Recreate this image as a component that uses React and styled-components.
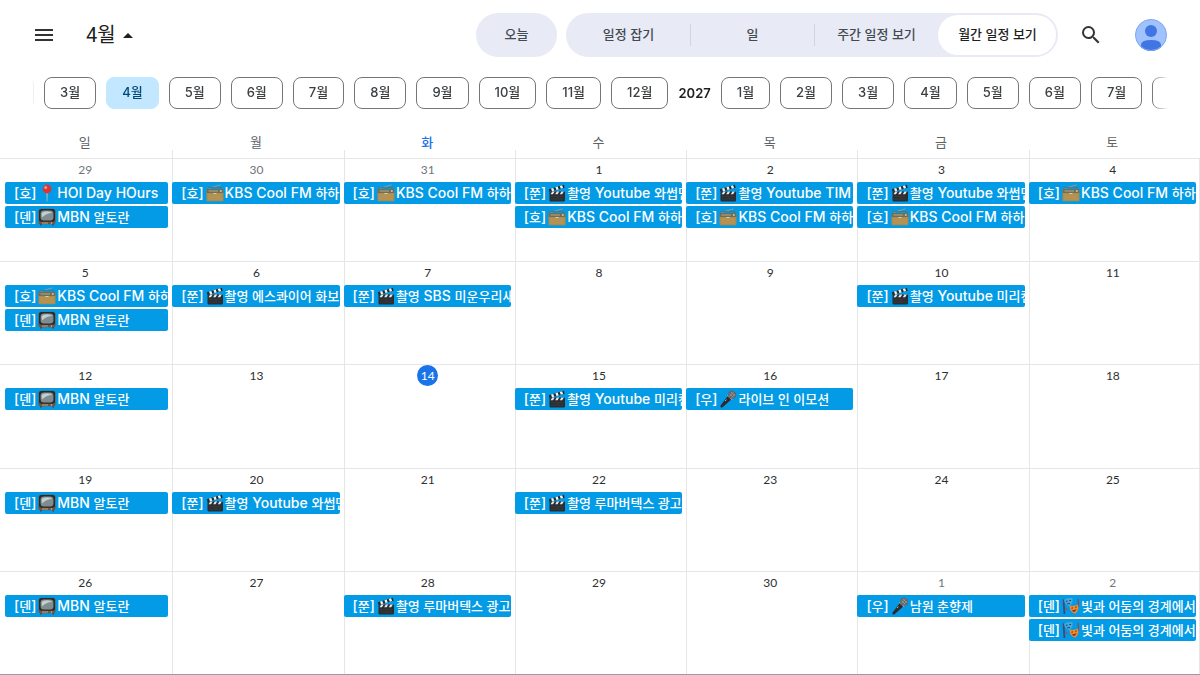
import { useState } from 'react';
import styled, { createGlobalStyle, css } from 'styled-components';

const GlobalStyle = createGlobalStyle`
  * {
    box-sizing: border-box;
  }
  body {
    margin: 0;
    background: #fff;
    color: #1f1f1f;
    font-family: Inter, 'Noto Sans CJK KR', sans-serif;
    font-size: 13px;
  }
  button {
    font: inherit;
    color: inherit;
    margin: 0;
    padding: 0;
    border: 0;
    background: none;
    cursor: pointer;
  }
`;

const Page = styled.div`
  display: flex;
  flex-direction: column;
  min-height: 100vh;
  border-bottom: 1px solid #9a9c9e;
`;

const Toolbar = styled.header`
  display: flex;
  align-items: center;
  padding: 13px 33px 0 32px;
`;

const IconButton = styled.button`
  display: flex;
  color: #333;
`;

const MonthTitle = styled.button`
  display: flex;
  align-items: center;
  gap: 6px;
  margin: 0 auto 0 30px;
  font-family: Roboto, 'Noto Sans CJK KR', sans-serif;
  font-size: 20px;
  line-height: 28px;
`;

const pill = css`
  height: 44px;
  border-radius: 22px;
  background: #e8ebf5;
`;

const TodayButton = styled.button`
  ${pill}
  width: 81px;
  margin-right: 9px;
  padding-bottom: 4px;
  color: #444a52;
  font-weight: 500;
`;

const ViewSwitch = styled.div`
  ${pill}
  display: grid;
  grid-template-columns: repeat(3, 124px) 120px;
  align-items: center;
  margin-right: 21px;
`;

const ViewButton = styled.button`
  height: 22px;
  padding-bottom: 4px;
  border-left: 1px solid ${({ $divided }) => ($divided ? '#d0d4de' : 'transparent')};
  color: #444a52;
  font-weight: 500;
  ${({ $active }) =>
    $active &&
    css`
      height: 40px;
      margin-right: 2px;
      border-radius: 20px;
      background: #fff;
      color: #1f1f1f;
    `}
`;

const Avatar = styled.button`
  display: flex;
  margin-left: 32px;
`;

const MonthStrip = styled.nav`
  display: flex;
  align-items: center;
  gap: 10px;
  margin: 20px 32px 0;
  overflow: hidden;
  mask-image: linear-gradient(to right, transparent, #000 12px, #000 calc(100% - 16px), transparent);
`;

const MonthButton = styled.button`
  flex-shrink: 0;
  height: 32px;
  padding: 0 15px 3px;
  border: 1px solid #747775;
  border-radius: 8px;
  color: #3c4043;
  font-weight: 500;
  ${({ $active }) =>
    $active &&
    css`
      border-color: #c2e7ff;
      background: #c2e7ff;
      color: #004a77;
    `}
`;

const PrevMonthButton = styled(MonthButton)`
  width: 51px;
  margin-left: -49px;
`;

const NextMonthButton = styled(MonthButton)`
  width: 51px;
`;

const Year = styled.span`
  flex-shrink: 0;
  font-weight: 600;
`;

const Calendar = styled.table`
  display: flex;
  flex: 1;
  flex-direction: column;
  margin-top: 20px;
`;

const WeekHead = styled.thead`
  display: block;
`;

const WeekBody = styled.tbody`
  display: grid;
  flex: 1;
  grid-auto-rows: 1fr;
`;

const WeekRow = styled.tr`
  display: grid;
  grid-template-columns: repeat(7, minmax(0, 1fr));
  padding-left: 1px;
`;

const DayRow = styled(WeekRow)`
  border-top: 1px solid #e4e6e8;
`;

const Weekday = styled.th`
  height: 29px;
  padding: 3px 4px 0 0;
  color: ${({ $today }) => ($today ? '#1a73e8' : '#5f6368')};
  font-weight: ${({ $today }) => ($today ? 500 : 400)};
  line-height: 20px;
  background: linear-gradient(#e4e6e8, #e4e6e8) left bottom / 1px 8px no-repeat;
  &:first-child {
    background: none;
  }
`;

const EventChip = styled.button`
  display: flex;
  align-items: center;
  height: 22px;
  margin-left: -1px;
  padding-left: 9px;
  border-radius: 2px;
  background: #039be5;
  color: #fff;
  font-size: 14px;
  font-weight: 500;
  line-height: 22px;
  white-space: pre;
  overflow: hidden;
  svg {
    flex-shrink: 0;
    margin: 0 1px 0 2px;
  }
`;

const Day = styled.td`
  display: flex;
  flex-direction: column;
  align-items: stretch;
  gap: 2px;
  min-height: 90px;
  padding: 0 4px 0 0;
  border-left: 1px solid #e4e6e8;
  &:first-child {
    border-left-color: transparent;
  }
  &:first-child ${EventChip} {
    margin-left: 3px;
  }
  &:last-child {
    border-right: 1px solid #e4e6e8;
    padding-right: 3px;
  }
`;

const DateNumber = styled.span`
  align-self: center;
  width: 21px;
  height: 21px;
  border-radius: 50%;
  font-family: Lato, sans-serif;
  font-size: 12px;
  line-height: 21px;
  text-align: center;
  color: ${({ $outside }) => ($outside ? '#70757a' : '#2d2f31')};
  ${({ $today }) =>
    $today &&
    css`
      background: #1a73e8;
      color: #fff;
    `}
`;

const Hangul = styled.span`
  font-size: 13px;
`;

const PinIcon = () => (
  <svg width="18" height="18" viewBox="0 0 18 18" aria-hidden="true">
    <path d="M8.4 8h1.3l-.3 9.5h-.7z" fill="#b6bcc2" />
    <circle cx="9" cy="5" r="4.4" fill="#dc3530" />
    <circle cx="7.7" cy="3.6" r="1.5" fill="#ff8f86" />
  </svg>
);

const TvIcon = () => (
  <svg width="18" height="18" viewBox="0 0 18 18" aria-hidden="true">
    <path d="M3.5 15l-1 2.5M14.5 15l1 2.5" stroke="#59402d" strokeWidth="1.5" />
    <rect x="0.5" y="0.8" width="17" height="15.4" rx="2.5" fill="#76533b" />
    <rect x="1" y="1" width="16" height="12.8" rx="2.5" fill="#292c2e" />
    <rect x="2.6" y="2.4" width="12.8" height="10" rx="3.2" fill="#7f8c90" />
    <path d="M3.6 5.6Q5 3.2 9 3.2t5 1.8Q8.5 5 4 9.6z" fill="#c3cdcf" />
    <path d="M4 15h6" stroke="#c7a27c" />
    <circle cx="13.5" cy="15" r="0.8" fill="#d8c2a1" />
  </svg>
);

const RadioIcon = () => (
  <svg width="18" height="18" viewBox="0 0 18 18" aria-hidden="true">
    <path d="M2 4.6L14.5.8" stroke="#8ba2a7" strokeWidth="0.9" />
    <path d="M2.2 6V3.6h13.6V6" fill="none" stroke="#5b7373" strokeWidth="1" />
    <rect x="0.5" y="5" width="17" height="12.3" rx="1" fill="#b08c4c" />
    <rect x="0.5" y="5" width="17" height="4" rx="0.8" fill="#6d6f5c" />
    <path d="M2.5 7h9.5" stroke="#b5a87a" strokeWidth="1.1" />
    <circle cx="14.8" cy="7" r="1" fill="#d4c79d" />
    <path d="M2 11h14M2 13h14M2 15h14" stroke="#c4a15f" strokeWidth="0.6" />
    <path d="M7.5 9h3v1h-3z" fill="#e0d2a5" />
  </svg>
);

const ClapperIcon = () => (
  <svg width="18" height="18" viewBox="0 0 18 18" aria-hidden="true">
    <path d="M.8 5.2L15.8.8l.9 3L1.6 8z" fill="#26292c" />
    <path d="M3 4.6l2.3-.7 1 2.8L4 7.3zM7.4 3.3l2.3-.7 1 2.8-2.3.7zM11.8 2l2.3-.7 1 2.8-2.3.7z" fill="#eef2f3" />
    <rect x="1.5" y="7.6" width="15.5" height="9.8" rx="0.8" fill="#2b2d30" />
    <path d="M4.2 7.6h2.4L5 10.2H2.6zM8.8 7.6h2.4l-1.6 2.6H7.2zM13.4 7.6h2.4l-1.6 2.6h-2.4z" fill="#e4e9eb" />
    <path d="M3 12.6h12.5M3 15h12.5M10 12.6V15" stroke="#44484b" strokeWidth="0.5" />
  </svg>
);

const MicIcon = () => (
  <svg width="18" height="18" viewBox="0 0 18 18" aria-hidden="true">
    <path d="M9.2 5.6l3.6 3.5-9.3 8.2q-1.2.6-1.8-.1t-.1-1.8z" fill="#2d2a2c" />
    <path d="M8.6 5.3l4.5 4.3" stroke="#b5b8bb" strokeWidth="1.4" />
    <circle cx="13" cy="4.8" r="4" fill="#626569" />
    <path d="M10.4 3.5l4 4M12 2l3.7 3.7M10.5 6.4l4.4-4.8M12.6 7.6l3.5-3.6" stroke="#a8acaf" strokeWidth="0.6" />
    <path d="M7.4 9.8l-1.2 1.1" stroke="#d4d7d9" />
  </svg>
);

const MasksIcon = () => (
  <svg width="18" height="18" viewBox="0 0 18 18" aria-hidden="true">
    <path d="M1.6 2.4l.8 14.6" stroke="#4b4672" strokeWidth="1.8" />
    <path d="M16 2l.6 8" stroke="#a23d45" strokeWidth="1.2" />
    <path d="M2 2.8q4-2.6 8.5-1.5.8 5.4-3.2 7.7Q2.7 8.4 2 2.8z" fill="#45a9dd" />
    <path d="M3.8 4.5l1.7-.6M7.4 3.6l1.6-.1M5 7.2q1.4-1.3 3-.5" stroke="#143f68" fill="none" />
    <path d="M7.4 8.6q4.4 1 8.8-1 1 6.6-3.2 9.2-4.8-1-5.6-8.2z" fill="#ee8b30" />
    <path d="M9.4 11.2l1.6-.3M13.2 10.4l1.5-.6" stroke="#6e3010" />
    <path d="M9.8 13q2.5.5 4.6-1-.6 3-2.2 3T9.8 13z" fill="#8b321d" />
    <path d="M3.4 11l2.6 2" stroke="#bc3445" />
  </svg>
);

const icons = {
  pin: PinIcon,
  tv: TvIcon,
  radio: RadioIcon,
  clapper: ClapperIcon,
  mic: MicIcon,
  masks: MasksIcon,
};

const views = ['일정 잡기', '일', '주간 일정 보기', '월간 일정 보기'];
const weekdays = ['일', '월', '화', '수', '목', '금', '토'];
const thisYear = [3, 4, 5, 6, 7, 8, 9, 10, 11, 12];
const nextYear = [1, 2, 3, 4, 5, 6, 7];

const radio = ['[호]', 'radio', 'KBS Cool FM 하하'];
const tv = ['[덴]', 'tv', 'MBN 알토란'];
const film = (title) => ['[쭌]', 'clapper', `촬영 ${title}`];
const play = ['[덴]', 'masks', '빛과 어둠의 경계에서'];

const weeks = [
  [
    { date: 29, outside: true, events: [['[호]', 'pin', 'HOI Day HOurs'], tv] },
    { date: 30, outside: true, events: [radio] },
    { date: 31, outside: true, events: [radio] },
    { date: 1, events: [film('Youtube 와썹맨'), radio] },
    { date: 2, events: [film('Youtube TIM'), radio] },
    { date: 3, events: [film('Youtube 와썹맨'), radio] },
    { date: 4, events: [radio] },
  ],
  [
    { date: 5, events: [radio, tv] },
    { date: 6, events: [film('에스콰이어 화보')] },
    { date: 7, events: [film('SBS 미운우리새')] },
    { date: 8 },
    { date: 9 },
    { date: 10, events: [film('Youtube 미리캔')] },
    { date: 11 },
  ],
  [
    { date: 12, events: [tv] },
    { date: 13 },
    { date: 14, today: true },
    { date: 15, events: [film('Youtube 미리캔')] },
    { date: 16, events: [['[우]', 'mic', '라이브 인 이모션']] },
    { date: 17 },
    { date: 18 },
  ],
  [
    { date: 19, events: [tv] },
    { date: 20, events: [film('Youtube 와썹맨')] },
    { date: 21 },
    { date: 22, events: [film('루마버텍스 광고')] },
    { date: 23 },
    { date: 24 },
    { date: 25 },
  ],
  [
    { date: 26, events: [tv] },
    { date: 27 },
    { date: 28, events: [film('루마버텍스 광고')] },
    { date: 29 },
    { date: 30 },
    { date: 1, outside: true, events: [['[우]', 'mic', '남원 춘향제']] },
    { date: 2, outside: true, events: [play, play] },
  ],
];

// Hangul is set one size below the Latin letters beside it
const MixedText = ({ text }) => (
  <span>
    {text
      .split(/([가-힣]+(?: [가-힣]+)*)/)
      .map((part, i) => (i % 2 ? <Hangul key={i}>{part}</Hangul> : part))}
  </span>
);

const CalendarEvent = ({ event }) => {
  const [tag, icon, title] = event;
  const Icon = icons[icon];
  return (
    <EventChip type="button">
      <MixedText text={tag} />
      <Icon />
      <MixedText text={title} />
    </EventChip>
  );
};

const App = () => {
  const [view, setView] = useState(3);
  const [month, setMonth] = useState('2026-4');

  const renderMonth = (year) => (m) => {
    const key = `${year}-${m}`;
    return (
      <MonthButton key={key} type="button" $active={month === key} onClick={() => setMonth(key)}>
        {m}월
      </MonthButton>
    );
  };

  return (
    <>
      <GlobalStyle />
      <Page>
        <Toolbar>
          <IconButton type="button" aria-label="메뉴">
            <svg width="24" height="24" viewBox="0 0 24 24" fill="currentColor">
              <path d="M3 18h18v-2H3v2zm0-5h18v-2H3v2zm0-7v2h18V6H3z" />
            </svg>
          </IconButton>
          <MonthTitle type="button">
            {month.split('-')[1]}월
            <svg width="12" height="6" viewBox="0 0 12 6" fill="currentColor" aria-hidden="true">
              <path d="M1 6l5-5 5 5z" />
            </svg>
          </MonthTitle>
          <TodayButton type="button" onClick={() => setMonth('2026-4')}>
            오늘
          </TodayButton>
          <ViewSwitch>
            {views.map((name, i) => (
              <ViewButton
                key={name}
                type="button"
                $active={view === i}
                $divided={i > 0 && view !== i}
                onClick={() => setView(i)}
              >
                {name}
              </ViewButton>
            ))}
          </ViewSwitch>
          <IconButton type="button" aria-label="검색">
            <svg width="24" height="24" viewBox="0 0 24 24" fill="currentColor">
              <path d="M15.5 14h-.79l-.28-.27A6.47 6.47 0 0 0 16 9.5 6.5 6.5 0 1 0 9.5 16c1.61 0 3.09-.59 4.23-1.57l.27.28v.79l5 4.99L20.49 19l-4.99-5zm-6 0a4.5 4.5 0 1 1 0-9 4.5 4.5 0 0 1 0 9z" />
            </svg>
          </IconButton>
          <Avatar type="button" aria-label="계정">
            <svg width="32" height="32" viewBox="0 0 32 32">
              <clipPath id="avatar">
                <circle cx="16" cy="16" r="16" />
              </clipPath>
              <g clipPath="url(#avatar)">
                <circle cx="16" cy="16" r="16" fill="#a0c3ff" />
                <circle cx="16" cy="12" r="6" fill="#4076e4" />
                <path d="M6 32v-6q0-5 10-5t10 5v6z" fill="#4076e4" />
              </g>
              <circle cx="16" cy="16" r="15.5" fill="none" stroke="#84aaf0" />
            </svg>
          </Avatar>
        </Toolbar>
        <MonthStrip>
          <PrevMonthButton type="button" aria-label="이전 달" />
          {thisYear.map(renderMonth(2026))}
          <Year>2027</Year>
          {nextYear.map(renderMonth(2027))}
          <NextMonthButton type="button" aria-label="다음 달" />
        </MonthStrip>
        <Calendar>
          <WeekHead>
            <WeekRow>
              {weekdays.map((name, i) => (
                <Weekday key={name} scope="col" $today={i === 2}>
                  {name}
                </Weekday>
              ))}
            </WeekRow>
          </WeekHead>
          <WeekBody>
            {weeks.map((days, i) => (
              <DayRow key={i}>
                {days.map(({ date, outside, today, events = [] }) => (
                  <Day key={date}>
                    <DateNumber $outside={outside} $today={today}>
                      {date}
                    </DateNumber>
                    {events.map((event, j) => (
                      <CalendarEvent key={j} event={event} />
                    ))}
                  </Day>
                ))}
              </DayRow>
            ))}
          </WeekBody>
        </Calendar>
      </Page>
    </>
  );
};

export default App;
